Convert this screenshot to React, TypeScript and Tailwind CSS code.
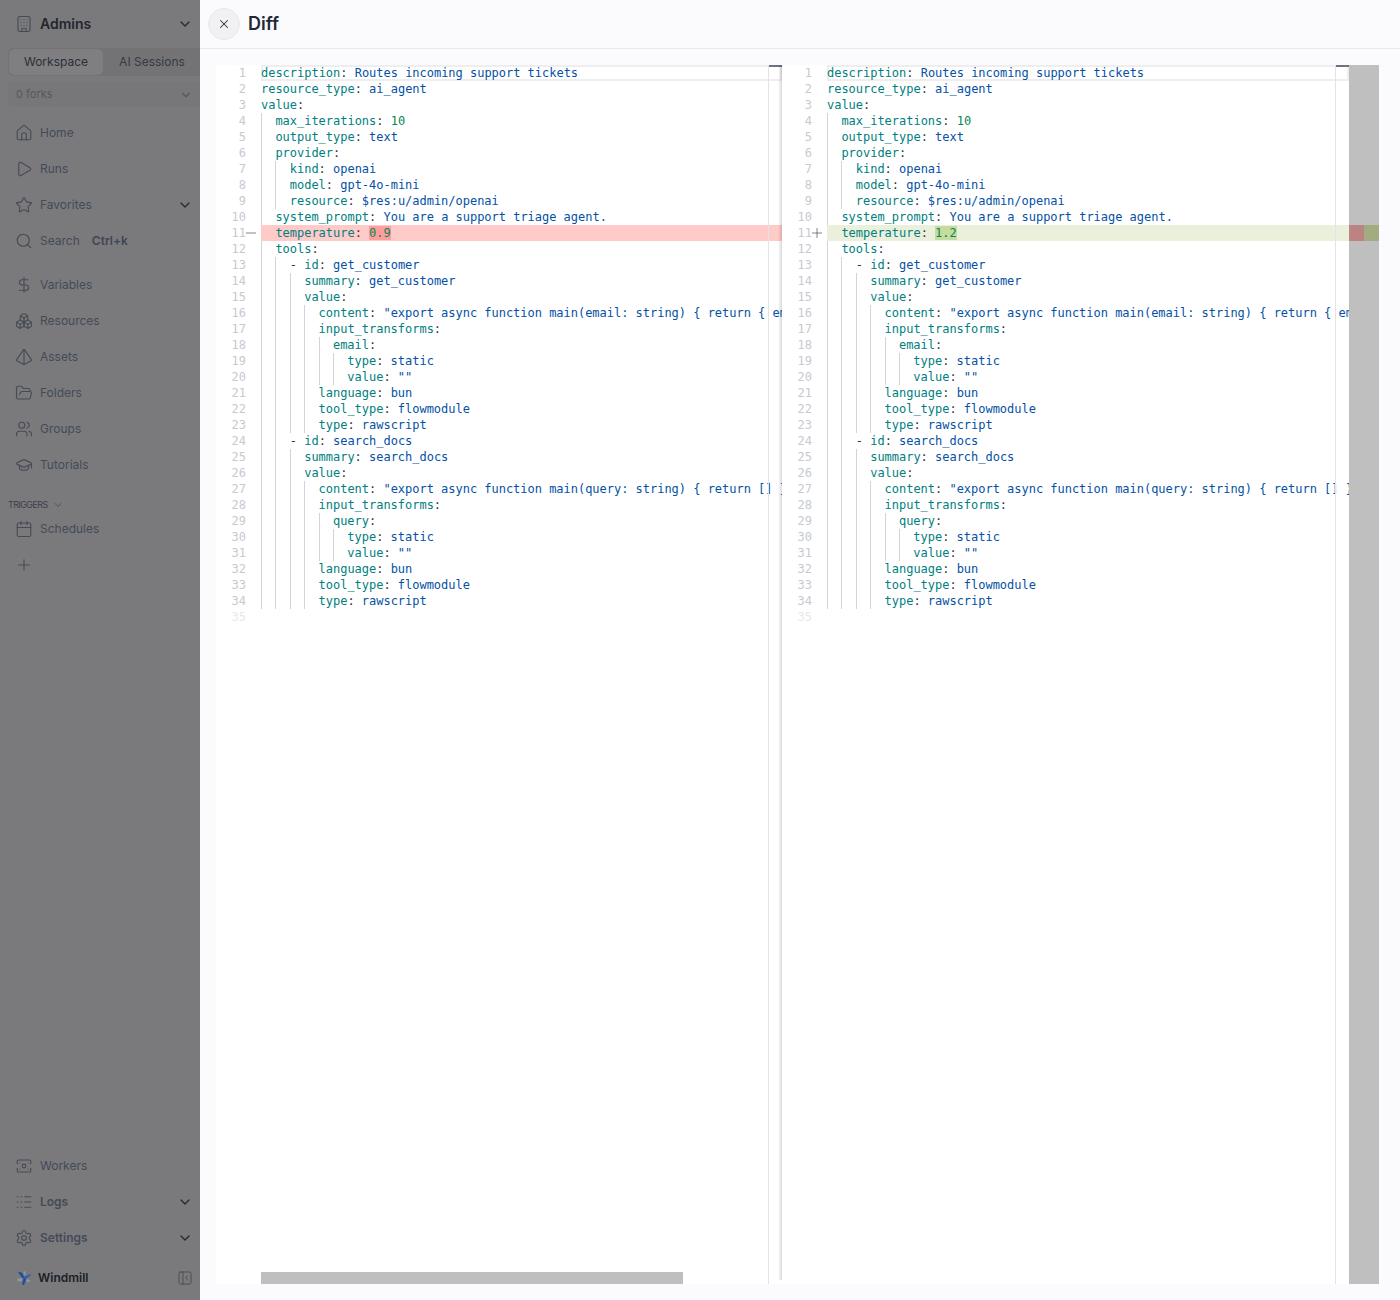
import React from "react";
import {
  Boxes,
  Building,
  Calendar,
  ChevronDown,
  DollarSign,
  FolderOpen,
  GraduationCap,
  Home,
  Logs,
  Minus,
  PanelLeftClose,
  Play,
  Plus,
  Pyramid,
  Search,
  Settings,
  Star,
  Users,
  X,
} from "lucide-react";

const yamlLeft = `description: Routes incoming support tickets
resource_type: ai_agent
value:
  max_iterations: 10
  output_type: text
  provider:
    kind: openai
    model: gpt-4o-mini
    resource: $res:u/admin/openai
  system_prompt: You are a support triage agent.
  temperature: 0.9
  tools:
    - id: get_customer
      summary: get_customer
      value:
        content: "export async function main(email: string) { return { email, plan: 'pro' } }"
        input_transforms:
          email:
            type: static
            value: ""
        language: bun
        tool_type: flowmodule
        type: rawscript
    - id: search_docs
      summary: search_docs
      value:
        content: "export async function main(query: string) { return [] }"
        input_transforms:
          query:
            type: static
            value: ""
        language: bun
        tool_type: flowmodule
        type: rawscript
`.split("\n");

const yamlRight = yamlLeft.map((l) => l.replace("temperature: 0.9", "temperature: 1.2"));

const WorkersIcon = ({ className }: { className?: string }) => (
  <svg
    viewBox="0 0 24 24"
    fill="none"
    stroke="currentColor"
    strokeWidth={1.5}
    strokeLinecap="round"
    className={className}
  >
    <path d="M3 9V5.5A1.5 1.5 0 0 1 4.5 4h15A1.5 1.5 0 0 1 21 5.5V9" />
    <path d="M3 15v3.5A1.5 1.5 0 0 0 4.5 20h15a1.5 1.5 0 0 0 1.5-1.5V15" />
    <circle cx="12" cy="12" r="2.5" />
    <path d="M6.5 8h.01M6.5 16h.01M17.5 8h.01M17.5 16h.01" />
  </svg>
);

const NavRow = ({
  icon: Icon,
  label,
  chevron,
  bold,
  hint,
}: {
  icon: React.ElementType;
  label: string;
  chevron?: boolean;
  bold?: boolean;
  hint?: string;
}) => (
  <div className="flex h-9 items-center pl-[15px] pr-[7px]">
    <Icon className="h-[18px] w-[18px] shrink-0 text-[#474b54]" strokeWidth={1.5} />
    <span className={`ml-[7px] text-xs ${bold ? "font-semibold" : ""} text-[#444a57]`}>{label}</span>
    {hint && <span className="ml-3 text-xs font-semibold text-[#3f4552]">{hint}</span>}
    {chevron && <ChevronDown className="ml-auto h-4 w-4 text-[#262a33]" strokeWidth={2} />}
  </div>
);

const WindmillLogo = () => (
  <svg viewBox="0 0 16 16" className="h-4 w-4 shrink-0">
    <path d="M7 1.5 10 1.5 9 6.5Z" fill="#8d97a8" />
    <path d="M1 9 6 8 6 11 2 11.5Z" fill="#8d97a8" />
    <path d="M10 9 14 10 13 12.5 10 11Z" fill="#8d97a8" />
    <path d="M2 2 6 2.5 8.5 8 6 8Z" fill="#1f4f99" />
    <path d="M8 6.5 14.5 4 15 5.5 9.5 9Z" fill="#2f63b5" />
    <path d="M7.5 8 10.5 8.5 8 15 6 14.5Z" fill="#1f4f99" />
  </svg>
);

const Sidebar = () => (
  <aside className="flex h-full w-[200px] shrink-0 flex-col bg-[#7a7a7d] font-['Inter',sans-serif]">
    <div className="flex h-12 items-center pl-[15px] pr-[7px]">
      <Building className="h-[18px] w-[18px] text-[#474b54]" strokeWidth={1.5} />
      <span className="ml-[7px] text-sm font-semibold text-[#23262e]">Admins</span>
      <ChevronDown className="ml-auto h-4 w-4 text-[#262a33]" strokeWidth={2} />
    </div>
    <div className="ml-2 flex h-7 rounded-l-md bg-[#737376] p-px">
      <div className="flex w-[94px] items-center justify-center rounded-md bg-[#7f7f82] text-xs text-[#2b2f38]">
        Workspace
      </div>
      <div className="flex flex-1 items-center justify-center pl-0.5 text-xs text-[#353a45]">AI Sessions</div>
    </div>
    <div className="ml-2 mt-[6px] flex h-[25px] items-center rounded-l-md bg-[#777779] pl-2 pr-[7px]">
      <span className="text-[11px] text-[#54585f]">0 forks</span>
      <ChevronDown className="ml-auto h-3.5 w-3.5 text-[#54585f]" />
    </div>
    <div className="mt-2">
      <NavRow icon={Home} label="Home" />
      <NavRow icon={Play} label="Runs" />
      <NavRow icon={Star} label="Favorites" chevron />
      <NavRow icon={Search} label="Search" hint="Ctrl+k" />
    </div>
    <div className="mt-2">
      <NavRow icon={DollarSign} label="Variables" />
      <NavRow icon={Boxes} label="Resources" />
      <NavRow icon={Pyramid} label="Assets" />
      <NavRow icon={FolderOpen} label="Folders" />
      <NavRow icon={Users} label="Groups" />
      <NavRow icon={GraduationCap} label="Tutorials" />
    </div>
    <div className="mt-4 flex h-3 items-center gap-1 pl-2 text-[9px] tracking-[-0.6px] text-[#3d4149]">
      TRIGGERS
      <ChevronDown className="h-3 w-3 text-[#4a4e56]" strokeWidth={1.75} />
    </div>
    <NavRow icon={Calendar} label="Schedules" />
    <NavRow icon={Plus} label="" />
    <div className="mt-auto">
      <NavRow icon={WorkersIcon} label="Workers" />
      <NavRow icon={Logs} label="Logs" chevron bold />
      <NavRow icon={Settings} label="Settings" chevron bold />
      <div className="flex h-11 items-center pl-[16px] pr-[7px]">
        <WindmillLogo />
        <span className="ml-[6px] text-xs font-semibold text-[#1c1e24]">Windmill</span>
        <PanelLeftClose className="ml-auto h-4 w-4 text-[#4c4f56]" strokeWidth={1.5} />
      </div>
    </div>
  </aside>
);

// yaml colouring, keys teal, values blue, numbers green
const YamlText = ({ text, changed }: { text: string; changed?: "del" | "add" }) => {
  const m = text.match(/^(- )?([a-z_]+)(:)(?: (.*))?$/);
  if (!m) return <span>{text}</span>;
  const [, dash, key, colon, value] = m;
  const isNum = value !== undefined && /^[\d.]+$/.test(value);
  return (
    <>
      {dash && <span className="text-[#333]">{dash}</span>}
      <span className="text-[#008080]">{key}</span>
      <span className="text-[#333]">{colon}</span>
      {value !== undefined && " "}
      {value !== undefined && (
        <span
          className={`${isNum ? "text-[#098658]" : "text-[#0451a5]"} ${
            changed === "del" ? "bg-[#ff9c9c]" : changed === "add" ? "bg-[#c4dd9f]" : ""
          }`}
        >
          {value}
        </span>
      )}
    </>
  );
};

const CodeLine = ({ text, changed, first }: { text: string; changed?: "del" | "add"; first?: boolean }) => {
  const indent = text.length - text.trimStart().length;
  const guides = Array.from({ length: indent / 2 });
  const bg = changed === "del" ? "bg-[#ffcbc9]" : changed === "add" ? "bg-[#ebf0dd]" : "";
  return (
    <div className={`h-4 whitespace-pre leading-4 ${bg} ${first ? "shadow-[inset_0_0_0_2px_#eeeeee]" : ""}`}>
      {guides.map((_, i) => (
        <span
          key={i}
          className={`inline-block h-4 w-[14.4px] align-top ${changed ? "" : "border-l border-[#d4d4d4]"}`}
        />
      ))}
      <YamlText text={text.trimStart()} changed={changed} />
    </div>
  );
};

const Ruler = () => (
  <div className="absolute bottom-0 right-0 top-0 w-[14px] border-l border-[#e4e4e4]">
    <div className="h-0.5 bg-[#6b7280]" />
  </div>
);

const DiffPane = ({
  lines,
  changed,
  className,
}: {
  lines: string[];
  changed: "del" | "add";
  className: string;
}) => (
  <div className={`flex h-full min-w-0 ${className}`}>
    <div className="w-[45px] shrink-0">
      {lines.map((_, i) => (
        <div key={i} className="flex h-4 leading-4">
          <span className={`w-[30px] text-right ${i === 34 ? "text-[#e6e8ec]" : "text-[#c6cad0]"}`}>{i + 1}</span>
          {i === 10 &&
            (changed === "del" ? (
              <Minus className="-ml-[3px] h-4 w-4 text-[#444a55]" strokeWidth={1} />
            ) : (
              <Plus className="-ml-[3px] h-4 w-4 text-[#444a55]" strokeWidth={1} />
            ))}
        </div>
      ))}
    </div>
    <div className="relative min-w-0 flex-1 overflow-hidden">
      {lines.map((l, i) => (
        <CodeLine key={i} text={l} changed={i === 10 ? changed : undefined} first={i === 0} />
      ))}
      <Ruler />
    </div>
  </div>
);

export default function App() {
  return (
    <div className="flex h-[1300px] w-[1400px] overflow-hidden">
      <Sidebar />
      <main className="flex h-full min-w-0 flex-1 flex-col bg-[#fbfbfd]">
        <header className="flex h-[49px] shrink-0 items-center border-b border-[#e8e8ec] pl-2 font-['Inter',sans-serif]">
          <button className="flex h-8 w-8 items-center justify-center rounded-full border border-[#e7e7ec] bg-[#f1f1f4]">
            <X className="h-3.5 w-3.5 text-[#2c3340]" strokeWidth={1.75} />
          </button>
          <h1 className="ml-2 text-lg font-semibold text-[#1f2937]">Diff</h1>
        </header>
        <div className="min-h-0 flex-1 pb-4 pl-4 pr-[21px] pt-4">
          <div className="relative flex h-full bg-white font-['DejaVu_Sans_Mono',monospace] text-xs tracking-[-0.02px]">
            <DiffPane lines={yamlLeft} changed="del" className="w-[566px] shrink-0" />
            <div className="absolute bottom-1 left-[562px] top-0 w-1 bg-gradient-to-r from-transparent to-black/15" />
            <DiffPane lines={yamlRight} changed="add" className="min-w-0 flex-1" />
            <div className="relative w-[30px] shrink-0 bg-[#bfbfbf]">
              <div className="absolute left-0 right-0 top-40 flex h-4">
                <div className="flex-1 bg-[#bd8383]" />
                <div className="flex-1 bg-[#a2ac80]" />
              </div>
            </div>
            <div className="absolute bottom-0 left-[45px] h-3 w-[422px] bg-[#bfbfbf]" />
          </div>
        </div>
      </main>
    </div>
  );
}
